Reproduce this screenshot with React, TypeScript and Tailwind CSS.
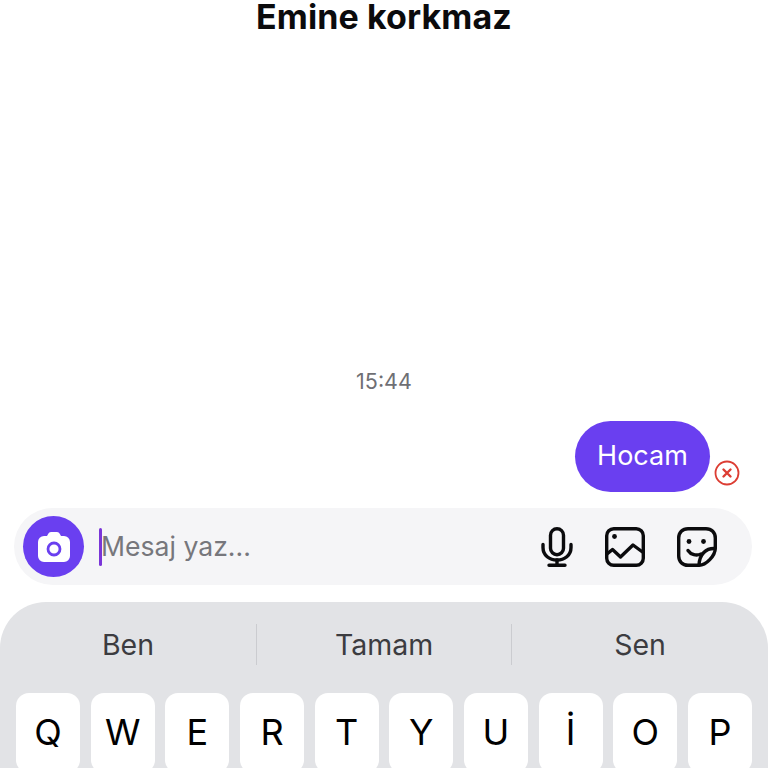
import React from "react";

const KEYS = ["Q", "W", "E", "R", "T", "Y", "U", "İ", "O", "P"];

function CameraIcon() {
    return (
        <svg width="34" height="32" viewBox="0 0 34 32" className="mt-[1px]">
            <path
                d="M11 3.200C11.800 1.700 12.800 1 14 1h6c1.200 0 2.200.7 3 2.200L24 5h3a6 6 0 0 1 6 6v14a6 6 0 0 1-6 6H7a6 6 0 0 1-6-6V11a6 6 0 0 1 6-6h3z"
                fill="#fff"
            />
            <circle cx="17" cy="18" r="6" fill="none" stroke="#6a3ff0" strokeWidth="2.800" />
        </svg>
    );
}

function MicIcon() {
    return (
        <svg width="32" height="40" viewBox="0 0 32 40" fill="none" stroke="#0b0b0d" strokeWidth="3.400" strokeLinecap="round" strokeLinejoin="round">
            <rect x="9.500" y="1.700" width="13" height="26" rx="6.500" />
            <path d="M2 17.500v3C2 28.500 8.500 33 16 33s14-4.500 14-12.500v-3" />
            <path d="M16 33v5M8 38.300h16" />
        </svg>
    );
}

function ImageIcon() {
    return (
        <svg width="40" height="40" viewBox="0 0 40 40" fill="none" stroke="#0b0b0d" strokeWidth="3.400" strokeLinecap="round" strokeLinejoin="round">
            <rect x="1.700" y="1.700" width="36.600" height="36.600" rx="7" />
            <circle cx="9.500" cy="9.500" r="2.400" fill="#0b0b0d" stroke="none" />
            <path d="M2 27l5.500-4.500 8 7.500L28 18l9.500 7" />
        </svg>
    );
}

function StickerIcon() {
    return (
        <svg width="40" height="40" viewBox="0 0 40 40" fill="none" stroke="#0b0b0d" strokeWidth="3.400" strokeLinecap="round" strokeLinejoin="round">
            <path d="M38.300 21V11C38.300 5.500 34.500 1.700 29 1.700H11C5.500 1.700 1.700 5.500 1.700 11v18c0 5.500 3.800 9.300 9.300 9.300h11C29 38.300 38.300 29 38.300 21z" />
            <path d="M38 21.500C29 21 22.500 27 22 38" />
            <path d="M11 23.500c3 4.500 8.500 5.500 13 3.500" />
            <circle cx="12" cy="14.500" r="2.400" fill="#0b0b0d" stroke="none" />
            <circle cx="26.500" cy="14.500" r="2.400" fill="#0b0b0d" stroke="none" />
        </svg>
    );
}

function ErrorIcon() {
    return (
        <svg width="26" height="26" viewBox="0 0 26 26" fill="none" stroke="#dc3d33" strokeLinecap="round">
            <circle cx="13" cy="13" r="11.500" strokeWidth="1.800" />
            <path d="M9.500 9.500l7 7M16.500 9.500l-7 7" strokeWidth="2.400" />
        </svg>
    );
}

export default function App() {
    return (
        <div className="w-[768px] h-[768px] overflow-hidden bg-white flex flex-col font-['Inter',sans-serif]">
            <h1 className="shrink-0 h-[35px] text-center text-[34px] leading-[34px] tracking-[0.1px] font-bold text-[#0b0b0d]">
                Emine korkmaz
            </h1>

            <div className="shrink-0 mt-[334px] h-[24px] text-center text-[21.500px] leading-[24px] text-[#6f6f74]">15:44</div>

            <div className="shrink-0 mt-[28px] pr-[28px] flex justify-end items-end gap-[4px]">
                <div className="w-[135px] h-[71px] rounded-[36px] bg-[#6a3ff0] text-white text-[27px] flex items-center justify-center">
                    Hocam
                </div>
                <div className="mb-[6px]">
                    <ErrorIcon />
                </div>
            </div>

            <div className="shrink-0 mt-[16px] mx-[14px] w-[738px] h-[77px] rounded-full bg-[#f5f5f7] flex items-center pl-[9px] pr-[35px]">
                <div className="w-[61px] h-[61px] rounded-full bg-[#6a3ff0] flex items-center justify-center">
                    <CameraIcon />
                </div>
                <div className="ml-[15px] w-[3px] h-[38px] rounded-full bg-[#7a35d8]" />
                <div className="text-[26.600px] text-[#77777c] -ml-[1px]">Mesaj yaz...</div>
                <div className="ml-auto flex items-center gap-[32px]">
                    <MicIcon />
                    <ImageIcon />
                    <StickerIcon />
                </div>
            </div>

            <div className="shrink-0 mt-[17px] h-[166px] rounded-t-[46px] bg-[#e2e3e6] px-[16px]">
                <div className="-mx-[16px] h-[91px] flex items-start pt-[22px]">
                    <div className="w-[256px] h-[43px] flex items-center justify-center text-[28.500px] text-[#3c3c40]">Ben</div>
                    <div className="w-px h-[41px] bg-[#cbccd0]" />
                    <div className="w-[254px] h-[43px] flex items-center justify-center text-[28.500px] text-[#3c3c40]">Tamam</div>
                    <div className="w-px h-[41px] bg-[#cbccd0]" />
                    <div className="flex-1 h-[43px] flex items-center justify-center text-[28.500px] text-[#3c3c40]">Sen</div>
                </div>
                <div className="flex justify-between">
                    {KEYS.map((k) => (
                        <div key={k} className="w-[64px] h-[80px] rounded-[13px] bg-white flex justify-center pt-[17px] text-[36px] leading-[44px] text-black">
                            {k}
                        </div>
                    ))}
                </div>
            </div>
        </div>
    );
}
